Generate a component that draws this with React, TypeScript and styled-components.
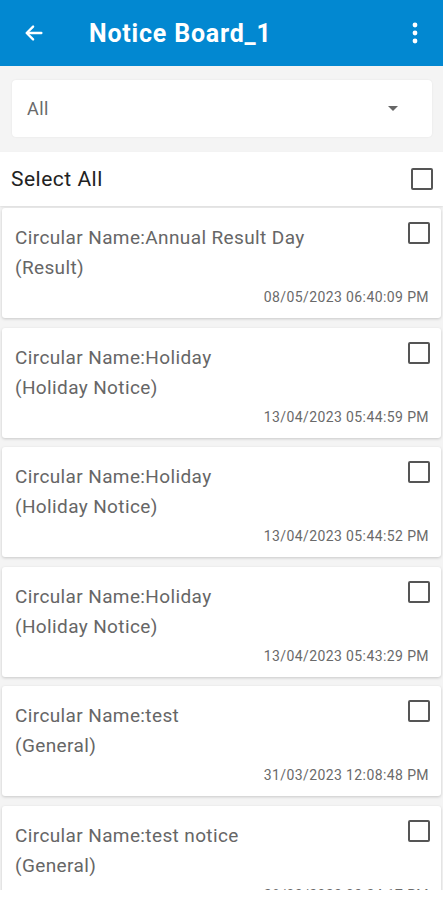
import * as React from "react";
import styled, { createGlobalStyle } from "styled-components";

const GlobalStyle = createGlobalStyle`
  html, body {
    margin: 0;
    padding: 0;
    background: #ffffff;
  }
  body {
    font-family: Roboto, "Liberation Sans", Arial, sans-serif;
  }
`;

const Screen = styled.div`
  width: 443px;
  height: 890px;
  overflow: hidden;
  background: #f4f4f4;
  display: flex;
  flex-direction: column;
`;

const AppBar = styled.header`
  height: 66px;
  flex: none;
  background: #0288d1;
  display: flex;
  align-items: center;
  padding: 0 14px 0 20px;
  color: #fff;
`;

const IconButton = styled.div`
  width: 28px;
  height: 28px;
  display: flex;
  align-items: center;
  justify-content: center;
`;

const Title = styled.h1`
  margin: 0 0 0 41px;
  flex: 1;
  font-size: 25px;
  font-weight: 700;
  letter-spacing: 0.8px;
`;

const FilterWrap = styled.div`
  flex: none;
  padding: 14px 11px 14px 12px;
`;

const Dropdown = styled.div`
  height: 57px;
  background: #fff;
  border-radius: 4px;
  box-shadow: 0 0 2px rgba(0, 0, 0, 0.08);
  display: flex;
  align-items: center;
  justify-content: space-between;
  padding: 0 34px 0 15px;
  font-size: 18px;
  letter-spacing: 0.5px;
  color: #6a6a6a;
`;

const Caret = styled.span`
  width: 0;
  height: 0;
  border-left: 5px solid transparent;
  border-right: 5px solid transparent;
  border-top: 5px solid #666;
`;

const SelectAllRow = styled.div`
  flex: none;
  margin-top: 1px;
  height: 54px;
  background: #fff;
  display: flex;
  align-items: center;
  justify-content: space-between;
  padding: 0 10px 0 11px;
  font-size: 21px;
  letter-spacing: 0.5px;
  color: #222;
  box-shadow: 0 1px 2px rgba(0, 0, 0, 0.1);
`;

const Box = styled.span`
  width: 18px;
  height: 18px;
  border: 2px solid #555;
  border-radius: 2px;
  box-sizing: content-box;
  flex: none;
`;

const List = styled.div`
  flex: none;
  display: flex;
  flex-direction: column;
  gap: 9.6px;
  padding: 2px 2px 0 2px;
`;

const Card = styled.div`
  background: #fff;
  border-radius: 3px;
  box-shadow: 0 1px 3px rgba(0, 0, 0, 0.18);
  height: 110px;
  box-sizing: border-box;
  padding: 15px 11px 0 13px;
  display: grid;
  grid-template-columns: 1fr auto;
  align-content: start;
  align-items: start;
  flex: none;

  ${Box} {
    margin-top: -1px;
  }
`;

const Texts = styled.div`
  display: flex;
  flex-direction: column;
  color: #666;
  font-size: 19px;
  letter-spacing: 0.38px;
  line-height: 30px;
`;

const DateLine = styled.div`
  grid-column: 1 / 3;
  text-align: right;
  font-size: 14px;
  letter-spacing: 0.4px;
  color: #6a6a6a;
  margin-top: 6px;
  padding-right: 1px;
`;

const notices = [
  { name: "Annual Result Day", type: "Result", date: "08/05/2023 06:40:09 PM" },
  { name: "Holiday", type: "Holiday Notice", date: "13/04/2023 05:44:59 PM" },
  { name: "Holiday", type: "Holiday Notice", date: "13/04/2023 05:44:52 PM" },
  { name: "Holiday", type: "Holiday Notice", date: "13/04/2023 05:43:29 PM" },
  { name: "test", type: "General", date: "31/03/2023 12:08:48 PM" },
  { name: "test notice", type: "General", date: "28/03/2023 03:24:17 PM" },
];

export default function App() {
  return (
    <>
      <GlobalStyle />
      <Screen>
        <AppBar>
          <IconButton>
            <svg width="22" height="22" viewBox="0 0 24 24" fill="none" stroke="#fff" strokeWidth="2.6" strokeLinecap="round" strokeLinejoin="round">
              <path d="M20 12H5" />
              <path d="M11 5l-7 7 7 7" />
            </svg>
          </IconButton>
          <Title>Notice Board_1</Title>
          <IconButton>
            <svg width="6" height="22" viewBox="0 0 6 22" fill="#fff">
              <circle cx="3" cy="3" r="2.4" />
              <circle cx="3" cy="11" r="2.4" />
              <circle cx="3" cy="19" r="2.4" />
            </svg>
          </IconButton>
        </AppBar>
        <FilterWrap>
          <Dropdown>
            <span>All</span>
            <Caret />
          </Dropdown>
        </FilterWrap>
        <SelectAllRow>
          <span>Select All</span>
          <Box />
        </SelectAllRow>
        <List>
          {notices.map((n, i) => (
            <Card key={i}>
              <Texts>
                <span>Circular Name:{n.name}</span>
                <span>({n.type})</span>
              </Texts>
              <Box />
              <DateLine>{n.date}</DateLine>
            </Card>
          ))}
        </List>
      </Screen>
    </>
  );
}
